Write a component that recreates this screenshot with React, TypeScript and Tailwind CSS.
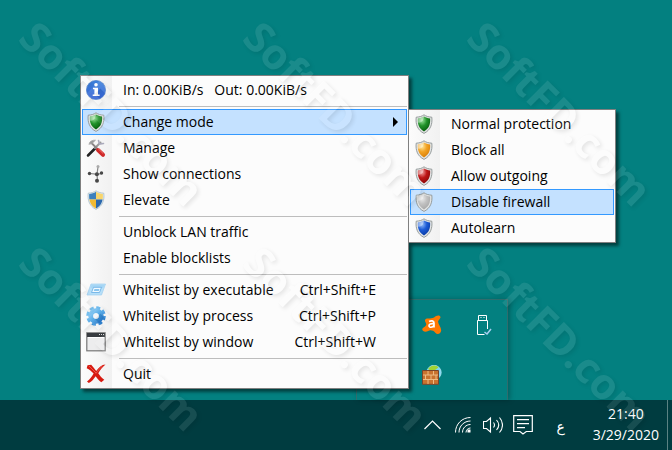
import type { ReactNode } from "react";

function ShieldIcon({ id, light, base, dark }: { id: string; light: string; base: string; dark: string }) {
  return (
    <svg width="20" height="20" viewBox="0 0 20 20" aria-hidden="true">
      <defs>
        <radialGradient id={id} cx="35%" cy="25%" r="75%">
          <stop offset="0" stopColor={light} />
          <stop offset=".5" stopColor={base} />
          <stop offset="1" stopColor={dark} />
        </radialGradient>
      </defs>
      <path d="M10 .8C8 2.4 5 3 2.200 3.200 1.400 10.500 3.600 16.200 10 19.400c6.400-3.200 8.600-8.900 7.800-16.200C15 3 12 2.400 10 .8Z" fill="#e3e5e5" stroke="#8d9494" strokeWidth=".9" />
      <path d="M10 2.600C8 3.800 6 4.300 3.900 4.600c-.4 6 1.200 10.200 6.100 12.900 4.900-2.700 6.500-6.900 6.100-12.900C14 4.300 12 3.800 10 2.600Z" fill={`url(#${id})`} />
      <path d="M10 2.600C8 3.800 6 4.300 3.900 4.600l0 4C7 9.500 9.500 7 10 2.600Z" fill="#fff" opacity=".4" />
    </svg>
  );
}

function InfoIcon() {
  return (
    <svg width="20" height="20" viewBox="0 0 20 20" aria-hidden="true">
      <defs>
        <linearGradient id="info" x1="0" y1="0" x2="0" y2="1">
          <stop offset="0" stopColor="#3d83dd" />
          <stop offset="1" stopColor="#3561d3" />
        </linearGradient>
      </defs>
      <circle cx="10" cy="10" r="9.600" fill="url(#info)" stroke="#4b7cc8" strokeWidth=".7" />
      <circle cx="10" cy="4.700" r="1.800" fill="#fff" />
      <path d="M7 7.700h5v6.800h1.600V16H6.700v-1.500h1.700V9.200H7Z" fill="#fff" />
    </svg>
  );
}

function ToolsIcon() {
  return (
    <svg width="20" height="20" viewBox="0 0 20 20" aria-hidden="true" fill="none" strokeLinecap="round">
      <path d="M2 17.500 9.500 10" stroke="#222" strokeWidth="2.500" />
      <path d="m9 10 5.500-5.500" stroke="#999" strokeWidth="2" />
      <path d="M12.500 2.500 13.500 6l4-.5" stroke="#aab" strokeWidth="1.600" />
      <path d="m5 4.500 6.500 6.500" stroke="#8b8585" strokeWidth="1.800" />
      <path d="M3 6C4 3 6 2 9.500 2.200L6 5.500Z" fill="#999" stroke="#aaa" strokeWidth=".8" />
      <path d="m12 12 5 4.800" stroke="#cf2929" strokeWidth="4" />
      <path d="m12.500 11 4.500 4.400" stroke="#ef7770" strokeWidth="1" />
    </svg>
  );
}

function NetworkIcon() {
  return (
    <svg width="20" height="20" viewBox="0 0 20 20" aria-hidden="true">
      <path d="m3 9.500 8 .7 6-.7M12 3l-1 7.200.5 6" fill="none" stroke="#858585" strokeWidth="1.200" />
      <g fill="#484848">
        <circle cx="12" cy="2.500" r="1.500" fill="#aaa" />
        <circle cx="3.500" cy="9.500" r="1.700" />
        <circle cx="10.900" cy="10.200" r="2" />
        <circle cx="15.500" cy="9" r="1.700" />
        <circle cx="11" cy="16.800" r="2" />
      </g>
    </svg>
  );
}

function UacIcon() {
  return (
    <svg width="20" height="20" viewBox="0 0 20 20" aria-hidden="true">
      <defs>
        <clipPath id="uac">
          <path d="M10 1.800C8 3.200 5.500 3.800 3.200 4 2.600 10.500 4.500 15.500 10 18.500c5.500-3 7.400-8 6.800-14.500C14.500 3.800 12 3.200 10 1.800Z" />
        </clipPath>
      </defs>
      <path d="M10 .8C8 2.400 5 3 2.200 3.200 1.400 10.500 3.600 16.200 10 19.400c6.400-3.200 8.600-8.900 7.800-16.200C15 3 12 2.400 10 .8Z" fill="#e5edf0" stroke="#a8bcc8" strokeWidth=".8" />
      <g clipPath="url(#uac)">
        <path d="M0 0h10v9.500H0Z" fill="#3c80bd" />
        <path d="M10 0h10v9.500H10Z" fill="#f8d56b" />
        <path d="M0 9.500h10V20H0Z" fill="#f0b932" />
        <path d="M10 9.500h10V20H10Z" fill="#2b68ad" />
      </g>
    </svg>
  );
}

function ExecutableIcon() {
  return (
    <svg width="20" height="20" viewBox="0 0 20 20" aria-hidden="true">
      <path d="M5 4h14.500l-4 11H1Z" fill="#b7dff8" stroke="#9dcef0" strokeWidth=".7" />
      <path d="M5.500 5h13L17 8H4.500Z" fill="#a5d6f5" />
      <path d="M7.500 7.300h8l-2 5.200h-8Z" fill="#f0f9ff" stroke="#6fb3e6" strokeWidth=".9" />
      <path d="M8.500 9h5l-.7 2H7.800Z" fill="#8ac5ee" />
    </svg>
  );
}

function GearIcon() {
  return (
    <svg width="20" height="20" viewBox="0 0 20 20" aria-hidden="true">
      <defs>
        <linearGradient id="gear" x1="0" y1="0" x2="1" y2="1">
          <stop offset="0" stopColor="#8dcdf5" />
          <stop offset=".5" stopColor="#4aa5e6" />
          <stop offset="1" stopColor="#2877c8" />
        </linearGradient>
      </defs>
      <circle cx="10" cy="10" r="8.200" fill="none" stroke="url(#gear)" strokeWidth="3.200" strokeDasharray="3.900 2.540" />
      <circle cx="10" cy="10" r="5.200" fill="none" stroke="url(#gear)" strokeWidth="5" />
      <circle cx="10" cy="10" r="2.700" fill="#f1f6fa" />
    </svg>
  );
}

function WindowIcon() {
  return (
    <svg width="20" height="20" viewBox="0 0 20 20" aria-hidden="true">
      <rect x=".8" y=".8" width="18.400" height="18" fill="#ededee" stroke="#777" strokeWidth="1.200" />
      <rect x="1" y="1" width="18" height="4" fill="#383c40" />
      <path d="M13 2.500h1m1 0h1m1 0h1" stroke="#ddd" />
      <path d="M2 5.500h16" stroke="#fff" />
    </svg>
  );
}

function QuitIcon() {
  return (
    <svg width="20" height="20" viewBox="0 0 20 20" aria-hidden="true">
      <path d="M1.500 1.200 5.200.8c1.800 2 3.300 4.200 5 6.200C13 3.500 15.500.8 19.500.6 16.500 3.300 14.300 5.800 12.300 9.200c1.700 2.600 3.200 4.500 6 6.500l-3 2.600c-2.300-1.600-4-3.700-5.600-6.100C7.500 15 6 17.500 2.800 19L1 17.500c3-2.300 4.900-4.800 6.600-7.900C5.500 7 3.500 5.500.7 4.200Z" fill="#d71a10" />
      <path d="m3 2 7 7M10 9.500c2-3 4-5.500 6.500-7.500" stroke="#f0675a" strokeWidth=".8" fill="none" />
    </svg>
  );
}

type Item = { label: string; icon?: ReactNode; keys?: string; active?: boolean; arrow?: boolean };

const green = { light: "#9be39b", base: "#22922a", dark: "#07600d" };

const groups: Item[][] = [
  [{ label: "In: 0.00KiB/s   Out: 0.00KiB/s", icon: <InfoIcon /> }],
  [
    { label: "Change mode", icon: <ShieldIcon id="mode" {...green} />, active: true, arrow: true },
    { label: "Manage", icon: <ToolsIcon /> },
    { label: "Show connections", icon: <NetworkIcon /> },
    { label: "Elevate", icon: <UacIcon /> },
  ],
  [{ label: "Unblock LAN traffic" }, { label: "Enable blocklists" }],
  [
    { label: "Whitelist by executable", icon: <ExecutableIcon />, keys: "Ctrl+Shift+E" },
    { label: "Whitelist by process", icon: <GearIcon />, keys: "Ctrl+Shift+P" },
    { label: "Whitelist by window", icon: <WindowIcon />, keys: "Ctrl+Shift+W" },
  ],
  [{ label: "Quit", icon: <QuitIcon /> }],
];

const modes: Item[] = [
  { label: "Normal protection", icon: <ShieldIcon id="normal" {...green} /> },
  { label: "Block all", icon: <ShieldIcon id="block" light="#ffe9a0" base="#f2a324" dark="#d98008" /> },
  { label: "Allow outgoing", icon: <ShieldIcon id="outgoing" light="#f1a0a0" base="#bd1515" dark="#8e0808" /> },
  { label: "Disable firewall", icon: <ShieldIcon id="disable" light="#ededed" base="#c2c2c2" dark="#a9a9a9" />, active: true },
  { label: "Autolearn", icon: <ShieldIcon id="learn" light="#94bdf8" base="#1c5bd6" dark="#0b3da7" /> },
];

function MenuItem({ item }: { item: Item }) {
  return (
    <button
      type="button"
      role="menuitem"
      className={`flex h-[26px] w-full items-center border pl-[3px] text-left whitespace-pre ${
        item.active ? "border-[#3399ff] bg-[#c4e1ff]" : "border-transparent"
      }`}
    >
      <span className="mr-[17px] size-5 shrink-0">{item.icon}</span>
      <span className="grow pb-0.5">{item.label}</span>
      {item.keys && <span className="mr-[30px] pb-0.5">{item.keys}</span>}
      {item.arrow && (
        <svg className="mr-2" width="5" height="10" viewBox="0 0 5 10" aria-hidden="true">
          <path d="M0 0 5 5 0 10Z" />
        </svg>
      )}
    </button>
  );
}

const menuStyle =
  "absolute border border-[#808080] bg-[#fcfcfc] bg-linear-to-r from-[#fcfcfc] to-[#f1f1f1] bg-no-repeat p-px text-black shadow-[3px_3px_3px_rgba(0,0,0,0.5)]";

function TrayPopup() {
  return (
    <div className="absolute right-[164px] bottom-0 grid h-[101px] w-[152px] grid-cols-3 grid-rows-2 place-items-center border border-b-0 border-[#306d6d] bg-[#038080] shadow-[2px_0_5px_rgba(0,0,0,0.25)]">
      <button type="button" aria-label="Antivirus" className="col-start-2 row-start-1">
        <svg width="20" height="20" viewBox="0 0 20 20">
          <path d="M12 2.500C14 .3 17.500-.3 18.400 1.700c.8 1.700-2.400 3.300-2.300 5 .1 2.500 3.600 6.300 3 9.200-.7 3-3.700 4-5.800 1.800-2-2.200-4.900-3-7.100-1.700-2.800 1.600-6.300.3-5.900-1.700.3-1.700 3.800-2.700 4-4.700.2-1.700-2.200-3.600-1-5.100C4.800 2.600 8.400 4.200 12 2.500Z" fill="#ff7800" />
          <path d="M7 6.400c2-1 5-.8 5 1.600v4.500M11.800 8.700C8.800 8.400 7 9 7 10.700c0 2.200 3.800 2 4.800-.1" fill="none" stroke="#fff" strokeWidth="1.700" />
        </svg>
      </button>
      <button type="button" aria-label="Safely remove hardware" className="col-start-3 row-start-1 pl-1">
        <svg width="16" height="20" viewBox="0 0 16 20" fill="none" stroke="#fff">
          <path d="M2.500 5V.5h8V5M11.500 14V5.500h-10v14h7M4.500 2.500h1M7.500 2.500h1" />
          <path d="m8.500 17 2.500 2 4-5" stroke="#a9cef0" strokeWidth="1.500" />
        </svg>
      </button>
      <button type="button" aria-label="Firewall" className="col-start-2 row-start-2">
        <svg width="20" height="20" viewBox="0 0 20 20">
          <circle cx="12" cy="7.500" r="7.200" fill="#7ed5f5" stroke="#aee5ef" strokeWidth=".8" />
          <path d="M6 4C10-.5 14 0 16.500 2.500L13 5l3 3-4 1-3-3Z" fill="#a0d432" />
          <path d="M.5 5.500h16v13.800H.5Z" fill="#c9732f" stroke="#79452c" />
          <path d="M1 10h15M1 14.500h15M6 6v4M11.500 6v4M3.500 10v4.500M9 10v4.500M14 10v4.500M6 14.500V19M11.500 14.500V19" stroke="#edbb83" />
        </svg>
      </button>
    </div>
  );
}

function Taskbar() {
  return (
    <footer className="flex h-[50px] shrink-0 items-center justify-end bg-[#003c40] pr-1 text-white">
      <button type="button" aria-label="Show hidden icons" className="mr-[14px]">
        <svg width="17" height="10" viewBox="0 0 17 10" fill="none" stroke="currentColor" strokeWidth="1.200">
          <path d="m.5 9 8-8 8 8" />
        </svg>
      </button>
      <button type="button" aria-label="Network" className="mr-3">
        <svg width="16" height="16" viewBox="0 0 16 16" fill="none" stroke="currentColor">
          <path d="M.5 15.500C.5 7 7 .5 15.500.5M4 15.500C4 9 9 4 15.500 4M7.500 15.500c0-4.500 3.500-8 8-8" />
          <path d="M11 15.500C11 13 13 11 15.500 11" />
          <path d="M12.500 12.500h3v3h-3Z" fill="currentColor" stroke="none" />
        </svg>
      </button>
      <button type="button" aria-label="Volume" className="mr-[10px]">
        <svg width="20" height="18" viewBox="0 0 20 18" fill="none" stroke="currentColor" strokeWidth="1.100">
          <path d="M.5 5.500h3L7.500 2v14l-4-3.500h-3ZM10.500 6.500c1.200 1.500 1.200 3.500 0 5M13.500 4c2.700 3 2.700 7 0 10M16.500 1.500c4 4.500 4 10.500 0 15" />
        </svg>
      </button>
      <button type="button" aria-label="Notifications" className="mr-5">
        <svg width="20" height="20" viewBox="0 0 20 20" fill="none" stroke="currentColor" strokeWidth="1.200">
          <path d="M.7.7h18.600v15.800h-6L10 19l-3-2.500H.7ZM4 4.700h12M4 8.700h12M4 12.700h8" />
        </svg>
      </button>
      <button type="button" aria-label="Keyboard language" className="mr-6 w-4 pt-1 font-['DejaVu_Sans',sans-serif] text-[14px]">ع</button>
      <button type="button" className="mr-2 pb-0.5 text-center text-[14px] leading-[21px]">
        <time dateTime="2020-03-29T21:40" className="block">
          <span className="block">21:40</span>
          <span className="block">3/29/2020</span>
        </time>
      </button>
      <div className="h-full w-px bg-[#5b8283]" />
    </footer>
  );
}

const marks = Array.from({ length: 6 }, (_, i) => i);

export default function App() {
  return (
    <div className="relative flex min-h-screen flex-col overflow-hidden bg-[#038080] font-['Open_Sans','Noto_Sans',sans-serif] text-[14px]">
      <main className="relative grow">
        <TrayPopup />
        <div role="menu" aria-label="Firewall" className={`${menuStyle} top-[75px] left-[80px] w-[329px] bg-size-[31px_100%]`}>
          {groups.map((items, i) => (
            <div key={i} role="group">
              {i > 0 && (
                <div role="separator" className="flex h-[6px] items-center pl-[37px]">
                  <div className="h-px w-full bg-[#bdbdbd]" />
                </div>
              )}
              {items.map((item) => (
                <MenuItem key={item.label} item={item} />
              ))}
            </div>
          ))}
        </div>
        <div role="menu" aria-label="Change mode" className={`${menuStyle} top-[109px] left-[408px] w-[208px] bg-size-[31px_100%]`}>
          {modes.map((item) => (
            <MenuItem key={item.label} item={item} />
          ))}
        </div>
      </main>
      <Taskbar />
      <div aria-hidden="true" className="pointer-events-none absolute top-0 left-0 grid w-[672px] grid-cols-3 font-['Open_Sans',sans-serif] text-[42px] leading-none font-bold text-white opacity-[0.09] drop-shadow-[2px_2px_2px_#000]">
        {marks.map((n) => (
          <div key={n} className="flex h-[225px] items-center justify-center">
            <span className="rotate-45">SoftFD.com</span>
          </div>
        ))}
      </div>
    </div>
  );
}
